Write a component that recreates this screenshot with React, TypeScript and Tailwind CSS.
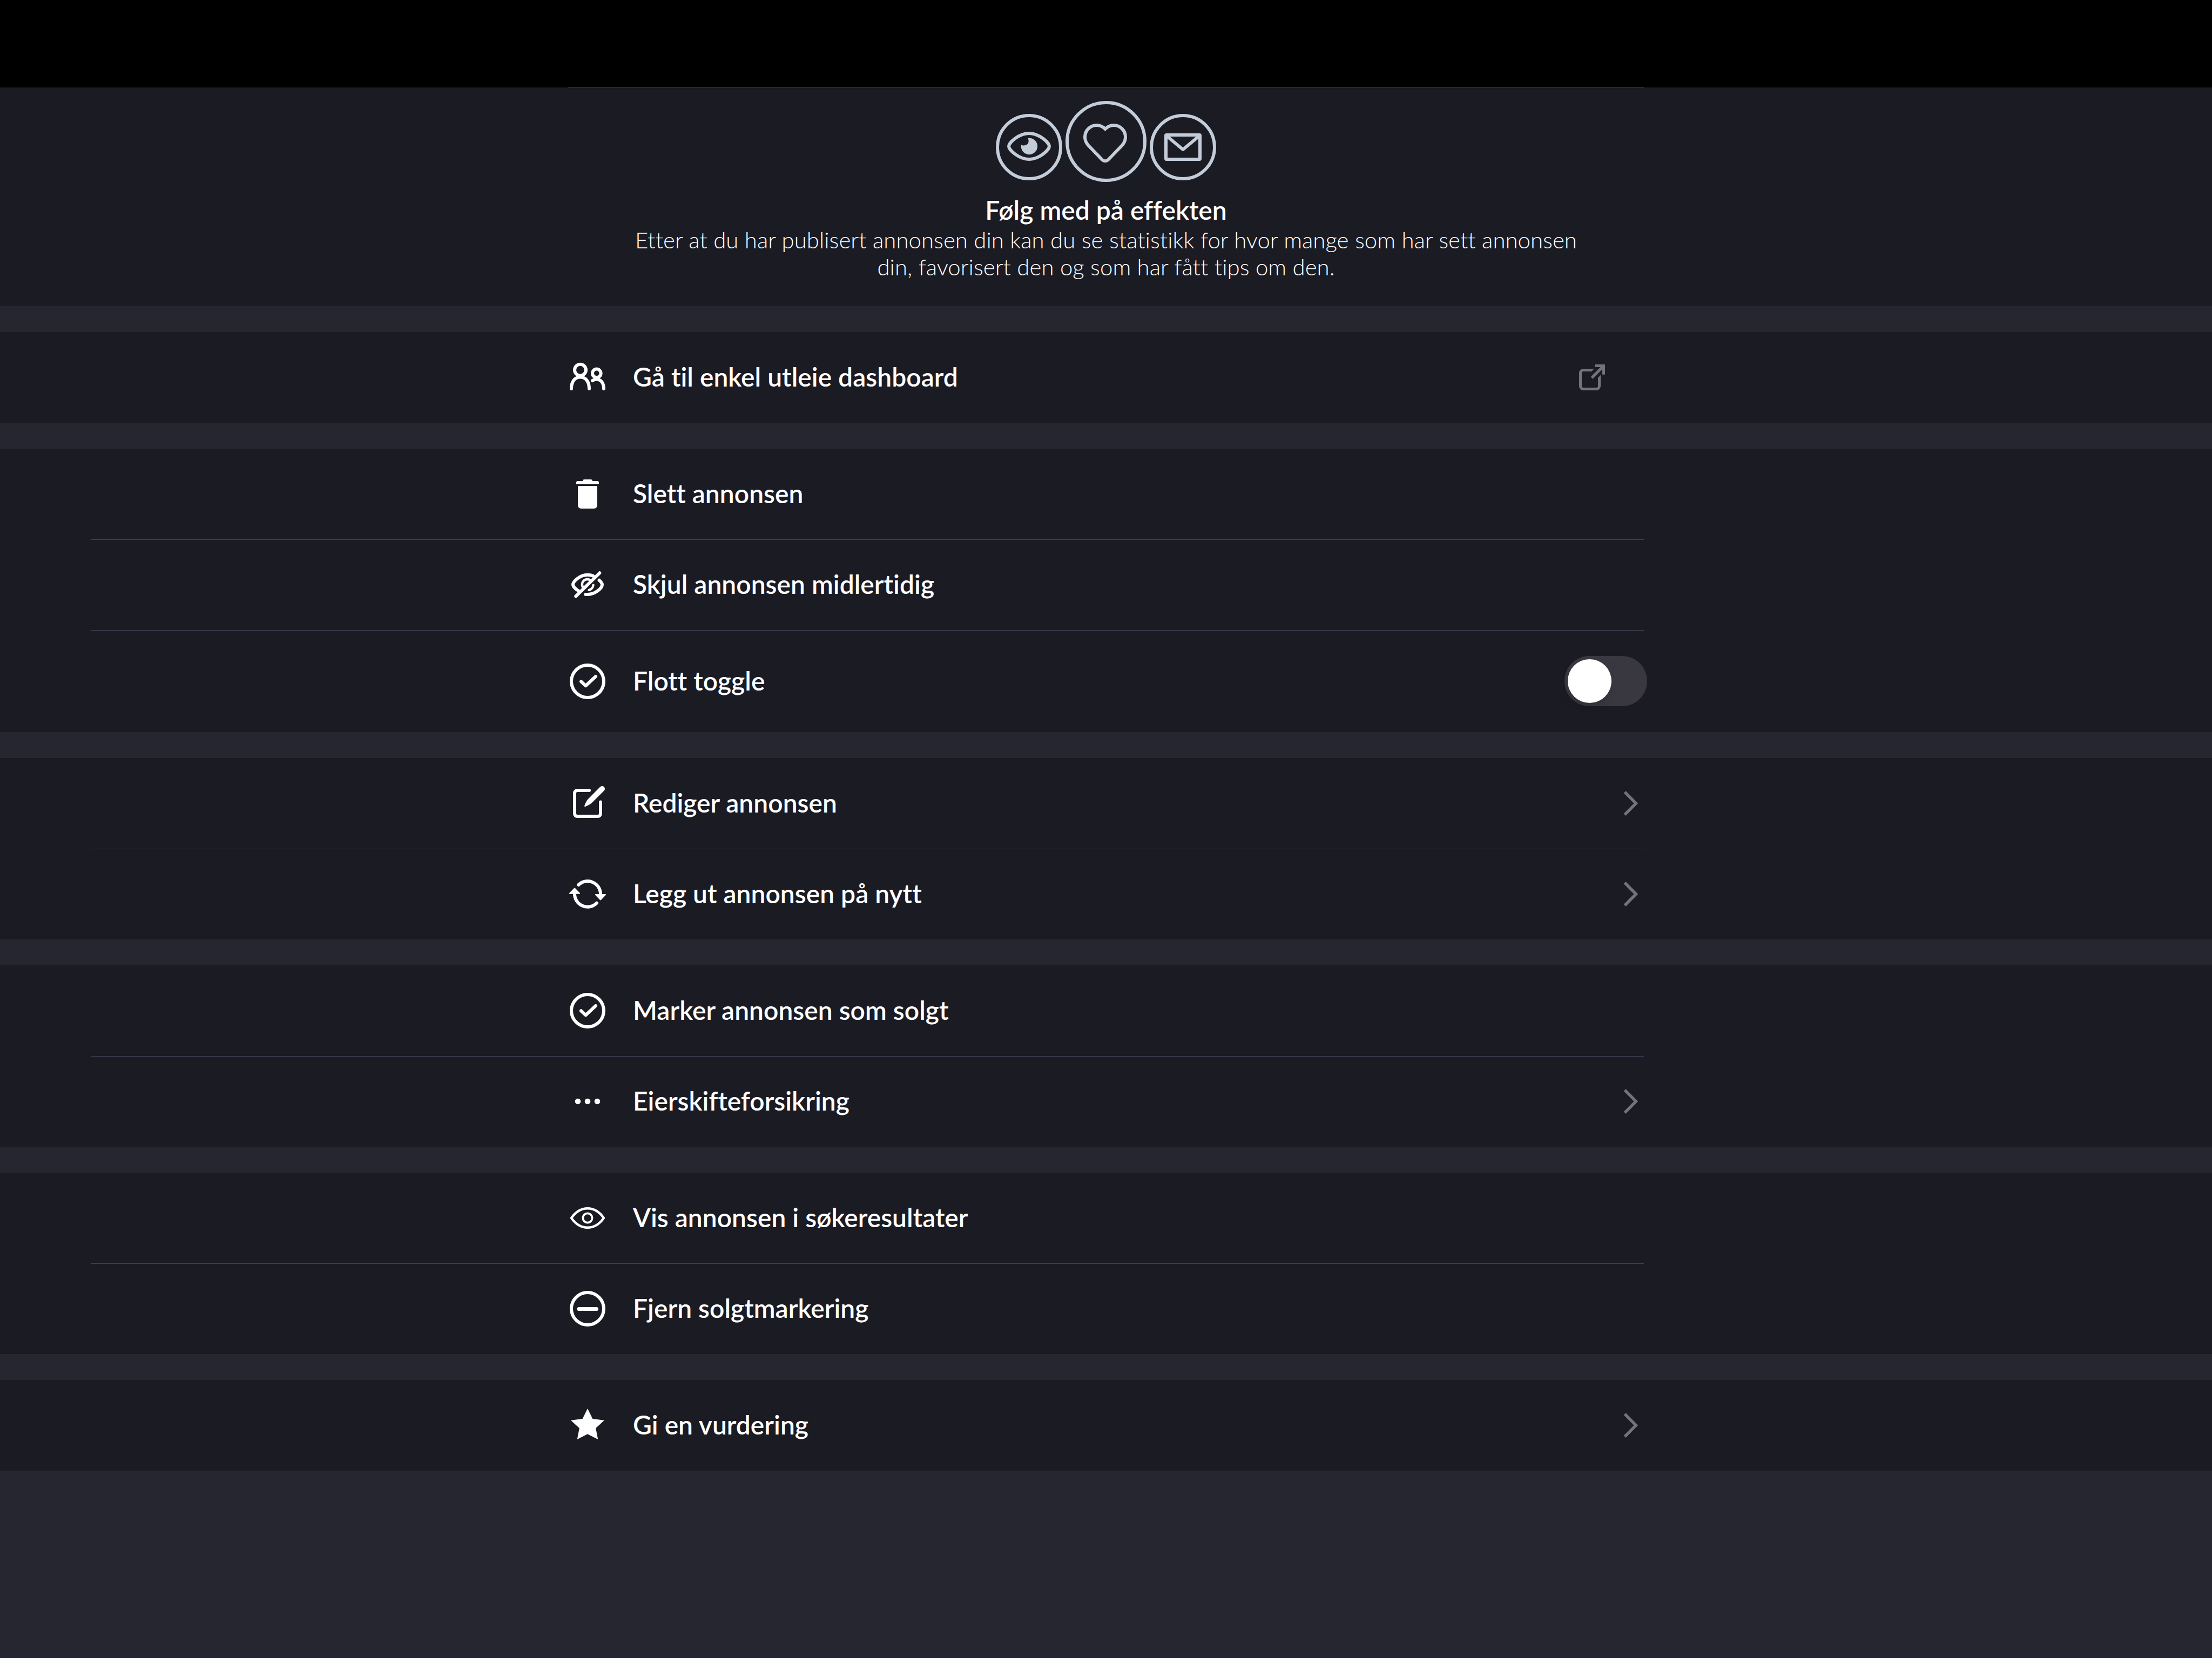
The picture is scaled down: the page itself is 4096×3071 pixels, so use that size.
import { useId, useState } from "react";
import type { ReactNode } from "react";

function RowIcon({ children }: { children: ReactNode }) {
  return (
    <svg
      viewBox="0 0 72 72"
      aria-hidden="true"
      className="size-18 shrink-0"
      fill="none"
      stroke="currentColor"
      strokeWidth="6"
      strokeLinecap="round"
      strokeLinejoin="round"
    >
      {children}
    </svg>
  );
}

const PeopleIcon = () => (
  <RowIcon>
    <circle cx="22.5" cy="22.2" r="10.5" />
    <path d="M6 57C6 45 11.5 35.5 22.5 35.5S39 45 39 57" />
    <circle cx="52.8" cy="28.4" r="7.8" />
    <path d="M45 42C47 40.6 49.6 39.4 52.5 39.4C60.5 39.4 66 46 66 57" />
  </RowIcon>
);

const TrashIcon = () => (
  <RowIcon>
    <g fill="currentColor" stroke="none">
      <path d="M15 18V15A3 3 0 0 1 18 12H27A3 3 0 0 1 30 9H42A3 3 0 0 1 45 12H54A3 3 0 0 1 57 15V18Z" />
      <path d="M18 21H54V57A6 6 0 0 1 48 63H24A6 6 0 0 1 18 57Z" />
    </g>
  </RowIcon>
);

const HiddenIcon = () => (
  <RowIcon>
    <path d="M21 48.5C14 44.5 9 39.5 9 36C9 30 22 17.8 36 17.8C40 17.8 43 18.4 46 19.6" />
    <path d="M57.6 27.8C61 30.8 63 33.6 63 36C63 42.5 50 54 36 54H32.4" />
    <g strokeWidth="4.4">
      <path d="M28.6 42.4A9.6 9.6 0 0 1 42.6 29" />
      <path d="M46.6 36.6A10.4 10.4 0 0 1 38.6 45.8" />
    </g>
    <path d="M58.3 14.3L14.3 57.3" />
  </RowIcon>
);

const CheckCircleIcon = () => (
  <RowIcon>
    <circle cx="36" cy="36" r="30" />
    <path d="M24 36.2L32.6 44.2L51 27" />
  </RowIcon>
);

const EditIcon = () => (
  <RowIcon>
    <path d="M39 12H17A5 5 0 0 0 12 17V55A5 5 0 0 0 17 60H55A5 5 0 0 0 60 55V33.5" />
    <path
      fill="currentColor"
      stroke="none"
      d="M59.3 5.6A5 5 0 0 1 66.6 12.6L43.5 35.5C41 38 36 40 32 42C30.8 42.5 29.7 41.5 30.3 40.2C32 36 34 31 36.5 28.4Z"
    />
  </RowIcon>
);

const RefreshIcon = () => (
  <RowIcon>
    <path d="M19.2 19A24 24 0 0 1 60 37" />
    <path d="M53 52.6A24 24 0 0 1 12 35" />
    <g fill="currentColor" strokeWidth="2">
      <path d="M51 37H69L60 46.5Z" />
      <path d="M3 34.8H21L12 25.4Z" />
    </g>
  </RowIcon>
);

const DotsIcon = () => (
  <RowIcon>
    <g fill="currentColor" stroke="none">
      <circle cx="18" cy="36" r="5.3" />
      <circle cx="36" cy="36" r="5.3" />
      <circle cx="54" cy="36" r="5.3" />
    </g>
  </RowIcon>
);

const EyeIcon = () => (
  <RowIcon>
    <path
      strokeWidth="4.4"
      d="M6 36C14 24.5 24 18.2 36 18.2S58 24.5 66 36C58 47.5 48 53.8 36 53.8S14 47.5 6 36Z"
    />
    <circle cx="36" cy="36" r="8.6" strokeWidth="3.8" />
  </RowIcon>
);

const MinusCircleIcon = () => (
  <RowIcon>
    <circle cx="36" cy="36" r="30" />
    <path strokeWidth="7" d="M20 36.5H52.5" />
  </RowIcon>
);

const StarIcon = () => (
  <RowIcon>
    <path
      fill="currentColor"
      stroke="none"
      d="M36 5L45.4 24L67 26.8L51.2 41.3L55.2 62L36 52.2L16.8 62L20.8 41.3L5 26.8L26.6 24Z"
    />
  </RowIcon>
);

function Chevron() {
  return (
    <svg
      viewBox="0 0 48 48"
      aria-hidden="true"
      className="size-12 shrink-0 text-[#73737c]"
      fill="none"
      stroke="currentColor"
      strokeWidth="5.4"
    >
      <path d="M12.6 3L33.4 24L12.6 45" />
    </svg>
  );
}

function ExternalIcon() {
  return (
    <svg viewBox="0 0 48 48" aria-hidden="true" className="mr-18 size-12 shrink-0 text-[#73737c]" fill="currentColor">
      <path d="M28 8H8A8 8 0 0 0 0 16V40A8 8 0 0 0 8 48H32A8 8 0 0 0 40 40V19.7L35 24.7V40A3 3 0 0 1 32 43H8A3 3 0 0 1 5 40V16A3 3 0 0 1 8 13H23Z" />
      <path d="M29 0H48V18.7H43V8.7L25.3 26.7L21.7 23L39.5 5H29Z" />
    </svg>
  );
}

function Hero() {
  return (
    <header className="bg-[#1b1b24]">
      <div className="mx-auto flex max-w-[1992px] flex-col items-center border-t border-[#434359] px-24 pt-6 pb-12 text-center">
        <div
          className="flex items-center gap-[6px] text-[#c3ccd9]"
          aria-hidden="true"
        >
          <svg viewBox="0 0 123 123" className="mt-[21px] size-[123px]" fill="none" stroke="currentColor" strokeWidth="6">
            <circle cx="61.5" cy="61.5" r="58.5" />
            <path d="M61.5 36C80 36 99 53 99 60S80 84 61.5 84S24 67 24 60S43 36 61.5 36Z" />
            <path
              fill="currentColor"
              stroke="none"
              d="M59.3 45A15.2 15.2 0 1 1 47 57C49 59.2 55 59 58.4 56C61.5 53 61 48 59.3 45Z"
            />
          </svg>
          <svg viewBox="0 0 150 150" className="size-[150px]" fill="none" stroke="currentColor" strokeWidth="6">
            <circle cx="75" cy="75" r="72" />
            <path d="M73.5 52C69 47.5 64 45 58 45C46 45 36 54.5 36 66.5C36 73 38.5 78 42 82L67.5 108.5C71 112 76 112 79.5 108.5L105 82C108.5 78 111 73 111 66.5C111 54.5 101 45 89 45C83 45 78 47.5 73.5 52Z" />
          </svg>
          <svg
            viewBox="0 0 123 123"
            className="mt-[21px] size-[123px]"
            fill="none"
            stroke="currentColor"
            strokeWidth="6"
            strokeLinejoin="round"
          >
            <circle cx="61.5" cy="61.5" r="58.5" />
            <rect x="30" y="39" width="63" height="45" rx="1" />
            <path d="M31.5 41L61.5 66L91.5 41" />
          </svg>
        </div>
        <h1 className="mt-[22px] text-[48px] leading-[60px] font-semibold">Følg med på effekten</h1>
        <p className="text-[42px] leading-[50px] font-light">
          Etter at du har publisert annonsen din kan du se statistikk for hvor mange som har sett annonsen din,
          favorisert den og som har fått tips om den.
        </p>
      </div>
    </header>
  );
}

const rowClass =
  "mx-auto flex w-full max-w-[1992px] items-center gap-12 text-left text-[48px] leading-[60px] font-semibold";

function Row({ icon, label, trailing }: { icon: ReactNode; label: string; trailing?: ReactNode }) {
  return (
    <button type="button" className={`${rowClass} py-12`}>
      {icon}
      <span className="flex-1 pb-0.5">{label}</span>
      {trailing}
    </button>
  );
}

function LinkRow({ icon, label }: { icon: ReactNode; label: string }) {
  return (
    <a href="#dashboard" className={`${rowClass} py-12`}>
      {icon}
      <span className="flex-1 pb-0.5">{label}</span>
      <ExternalIcon />
    </a>
  );
}

function ToggleRow({ icon, label }: { icon: ReactNode; label: string }) {
  const id = useId();
  const [on, setOn] = useState(false);
  return (
    <div className={`${rowClass} py-12`}>
      {icon}
      <label htmlFor={id} className="flex-1 pb-0.5">
        {label}
      </label>
      <input
        id={id}
        type="checkbox"
        role="switch"
        checked={on}
        onChange={(e) => setOn(e.target.checked)}
        className="-mr-[6px] flex h-[93px] w-[153px] shrink-0 appearance-none rounded-full bg-[#393841] p-[6px] before:size-[81px] before:rounded-full before:bg-white before:shadow-lg checked:justify-end checked:bg-[#06befb]"
      />
    </div>
  );
}

function Divider() {
  return <div className="mr-[calc(50%-996px)] -mb-px ml-42 h-px bg-[#434359]" />;
}

function Section({ children }: { children: ReactNode }) {
  return <section className="bg-[#1b1b24]">{children}</section>;
}

export default function App() {
  return (
    <div className="min-h-screen bg-[#262631] font-['Lato',sans-serif] text-white [font-variant-ligatures:none]">
      <div className="h-[162px] bg-black" />
      <Hero />
      <main className="mt-12 flex flex-col gap-12">
        <Section>
          <LinkRow icon={<PeopleIcon />} label="Gå til enkel utleie dashboard" />
        </Section>
        <Section>
          <Row icon={<TrashIcon />} label="Slett annonsen" />
          <Divider />
          <Row icon={<HiddenIcon />} label="Skjul annonsen midlertidig" />
          <Divider />
          <ToggleRow icon={<CheckCircleIcon />} label="Flott toggle" />
        </Section>
        <Section>
          <Row icon={<EditIcon />} label="Rediger annonsen" trailing={<Chevron />} />
          <Divider />
          <Row icon={<RefreshIcon />} label="Legg ut annonsen på nytt" trailing={<Chevron />} />
        </Section>
        <Section>
          <Row icon={<CheckCircleIcon />} label="Marker annonsen som solgt" />
          <Divider />
          <Row icon={<DotsIcon />} label="Eierskifteforsikring" trailing={<Chevron />} />
        </Section>
        <Section>
          <Row icon={<EyeIcon />} label="Vis annonsen i søkeresultater" />
          <Divider />
          <Row icon={<MinusCircleIcon />} label="Fjern solgtmarkering" />
        </Section>
        <Section>
          <Row icon={<StarIcon />} label="Gi en vurdering" trailing={<Chevron />} />
        </Section>
      </main>
    </div>
  );
}
